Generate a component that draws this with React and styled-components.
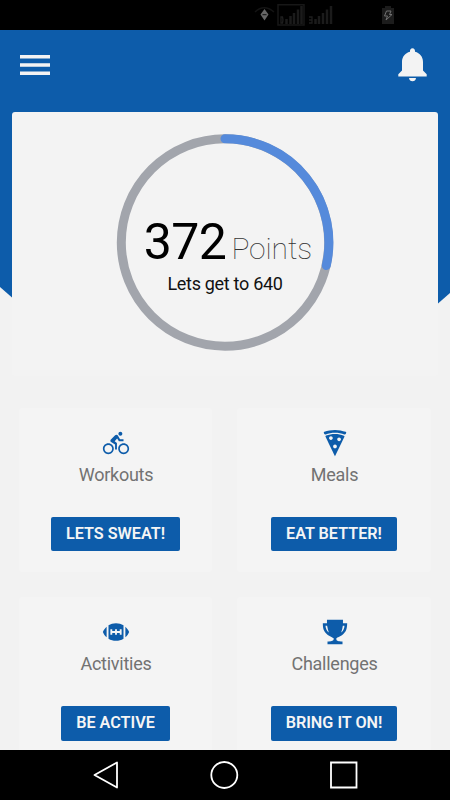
import React from "react";
import styled, { createGlobalStyle } from "styled-components";
import {
  IoMdBicycle,
  IoMdPizza,
  IoMdAmericanFootball,
  IoMdTrophy,
} from "react-icons/io";

const BLUE = "#0d5caa";

const GlobalStyle = createGlobalStyle`
  * { box-sizing: border-box; }
  body { margin: 0; background: #f2f2f2; font-family: Roboto, "Liberation Sans", sans-serif; }
`;

const Screen = styled.div`
  width: 450px;
  height: 800px;
  display: flex;
  flex-direction: column;
  overflow: hidden;
  background: #f2f2f2;
`;

const StatusBar = styled.div`
  flex: none;
  height: 30px;
  background: #000;
  display: flex;
`;

const StatusIcons = styled.svg`
  display: block;
  margin-left: 240px;
`;

const Main = styled.main`
  position: relative;
  flex: 1;
  min-height: 0;
  overflow: hidden;
  isolation: isolate;

  &::before {
    content: "";
    position: absolute;
    z-index: -1;
    inset: 0 0 auto;
    height: 330px;
    background: ${BLUE};
    clip-path: polygon(0 0, 100% 0, 100% 263px, 438px 273.5px, 225px 330px, 12px 267.5px, 0 257px);
  }
`;

const Header = styled.header`
  height: 82px;
  padding: 17px 23px 0 20px;
  display: flex;
  justify-content: space-between;
`;

const IconButton = styled.button`
  border: 0;
  padding: 0;
  background: none;
  height: 36px;
  svg { display: block; }
`;

const PointsCard = styled.section`
  margin: 0 12px;
  height: 264px;
  padding-top: 21px;
  border-radius: 3px;
  background: #f3f3f3;
  display: flex;
  justify-content: center;
`;

const Gauge = styled.div`
  width: 218px;
  height: 218px;
  display: grid;
  justify-items: center;
  align-items: start;
  > * { grid-area: 1 / 1; }
`;

const Summary = styled.div`
  padding-top: 83px;
  display: flex;
  flex-direction: column;
  align-items: center;
  white-space: nowrap;
`;

const Score = styled.div`
  margin-left: 6px;
  font-size: 50px;
  line-height: 52px;
  letter-spacing: -0.6px;
  color: #000;
`;

const Unit = styled.span`
  margin-left: 5px;
  font-size: 30px;
  font-weight: 100;
  letter-spacing: -0.1px;
  color: #333;
`;

const Goal = styled.div`
  margin-top: -3px;
  font-size: 18px;
  line-height: 24px;
  letter-spacing: -0.3px;
  color: #111;
`;

const Tiles = styled.section`
  padding: 32px 19px 0;
  display: grid;
  grid-template-columns: 193px 194px;
  justify-content: space-between;
  row-gap: 25px;
`;

const Tile = styled.article`
  height: 164px;
  padding: 20px 0 0 1px;
  border-radius: 2px;
  background: #f4f4f4;
  display: flex;
  flex-direction: column;
  align-items: center;
  color: ${BLUE};
  > svg { flex: none; }
`;

const TileTitle = styled.h2`
  margin: 5px 0 0;
  font-size: 18px;
  line-height: 24px;
  letter-spacing: -0.25px;
  font-weight: 400;
  color: #727272;
`;

const TileButton = styled.button`
  margin: 30px 1px 0 0;
  width: ${(p) => p.$width}px;
  height: ${(p) => p.$height}px;
  flex: none;
  padding: 0 0 ${(p) => p.$height - 33}px;
  border: 0;
  border-radius: 2px;
  background: ${BLUE};
  color: #f5f5f5;
  font: 600 16.2px/24px Roboto, "Liberation Sans", sans-serif;
  white-space: nowrap;
`;

const NavBar = styled.nav`
  flex: none;
  height: 50px;
  background: #000;
  svg { display: block; }
`;

const tiles = [
  { title: "Workouts", action: "LETS SWEAT!", Icon: IoMdBicycle, width: 129, height: 34 },
  { title: "Meals", action: "EAT BETTER!", Icon: IoMdPizza, width: 126, height: 34 },
  { title: "Activities", action: "BE ACTIVE", Icon: IoMdAmericanFootball, width: 109, height: 35 },
  { title: "Challenges", action: "BRING IT ON!", Icon: IoMdTrophy, width: 126, height: 35 },
];

export default function App() {
  return (
    <>
      <GlobalStyle />
      <Screen>
        <StatusBar>
          <StatusIcons width="210" height="30" fill="none">
            <path d="M15 12Q24 3.500 34 12" stroke="#141414" strokeWidth="1.500" />
            <path d="M24.500 9L28.500 14.500L24.500 20.500L20.500 14.500Z" fill="#666" />
            <path d="M22.500 14.700H26.500" stroke="#111" />
            <path d="M38 4.800H64V25H38Z" stroke="#171717" strokeWidth="1.500" />
            <path d="M41 17V23H42.500Q43.500 20 42.500 17ZM69 17H72V20H69H72V23H69" stroke="#1e1e1e" strokeWidth="1.300" />
            <path d="M46.500 24V19M50.500 24V16M54 24V13M58 24V9.500M61.500 24V6M75.500 24V19M79 24V16M83 24V13M87 24V9.500M91 24V6" stroke="#1b1b1b" strokeWidth="2.500" />
            <path d="M142 8H145V6H151V8H154V24H142Z" fill="#1c1c1c" />
            <path d="M146.500 11H151L149.500 14.500H152L146 20L147.500 16H144.500Z" stroke="#707070" />
          </StatusIcons>
        </StatusBar>
        <Main>
          <Header>
            <IconButton aria-label="Menu">
              <svg width="30" height="36" fill="#f3f3f3">
                <path d="M0 8H30V11.500H0ZM0 16.200H30V19.700H0ZM0 24.500H30V28H0Z" />
              </svg>
            </IconButton>
            <IconButton aria-label="Notifications">
              <svg width="29" height="36" fill="#f3f3f3">
                <path d="M14.500 1.300C16.200 1.300 17.200 2.500 17 4.800C22 6 25 9.900 25 15V23.500L28.700 27.300V29.600H.3V27.300L4 23.500V15C4 9.900 7 6 12 4.800C11.800 2.500 12.800 1.300 14.500 1.300ZM11 31H18Q17.500 34.300 14.500 34.300Q11.500 34.300 11 31Z" />
              </svg>
            </IconButton>
          </Header>
          <PointsCard>
            <Gauge>
              <svg width="218" height="218" fill="none">
                <circle cx="109" cy="109.500" r="103.700" stroke="#a2a5ac" strokeWidth="9" />
                <path d="M109 5.800A103.700 103.700 0 0 1 210.300 132.500" stroke="#558adb" strokeWidth="9" strokeLinecap="round" />
              </svg>
              <Summary>
                <Score>372<Unit>Points</Unit></Score>
                <Goal>Lets get to 640</Goal>
              </Summary>
            </Gauge>
          </PointsCard>
          <Tiles>
            {tiles.map(({ title, action, Icon, width, height }) => (
              <Tile key={title}>
                <Icon size={30} />
                <TileTitle>{title}</TileTitle>
                <TileButton $width={width} $height={height}>{action}</TileButton>
              </Tile>
            ))}
          </Tiles>
        </Main>
        <NavBar>
          <svg width="450" height="50" fill="none" stroke="#fff" strokeWidth="1.800">
            <path d="M117 12.500V37.500L94.500 25Z" strokeLinejoin="round" />
            <circle cx="224.300" cy="25" r="13" />
            <path d="M331 12.500H356.500V37.500H331Z" />
          </svg>
        </NavBar>
      </Screen>
    </>
  );
}
